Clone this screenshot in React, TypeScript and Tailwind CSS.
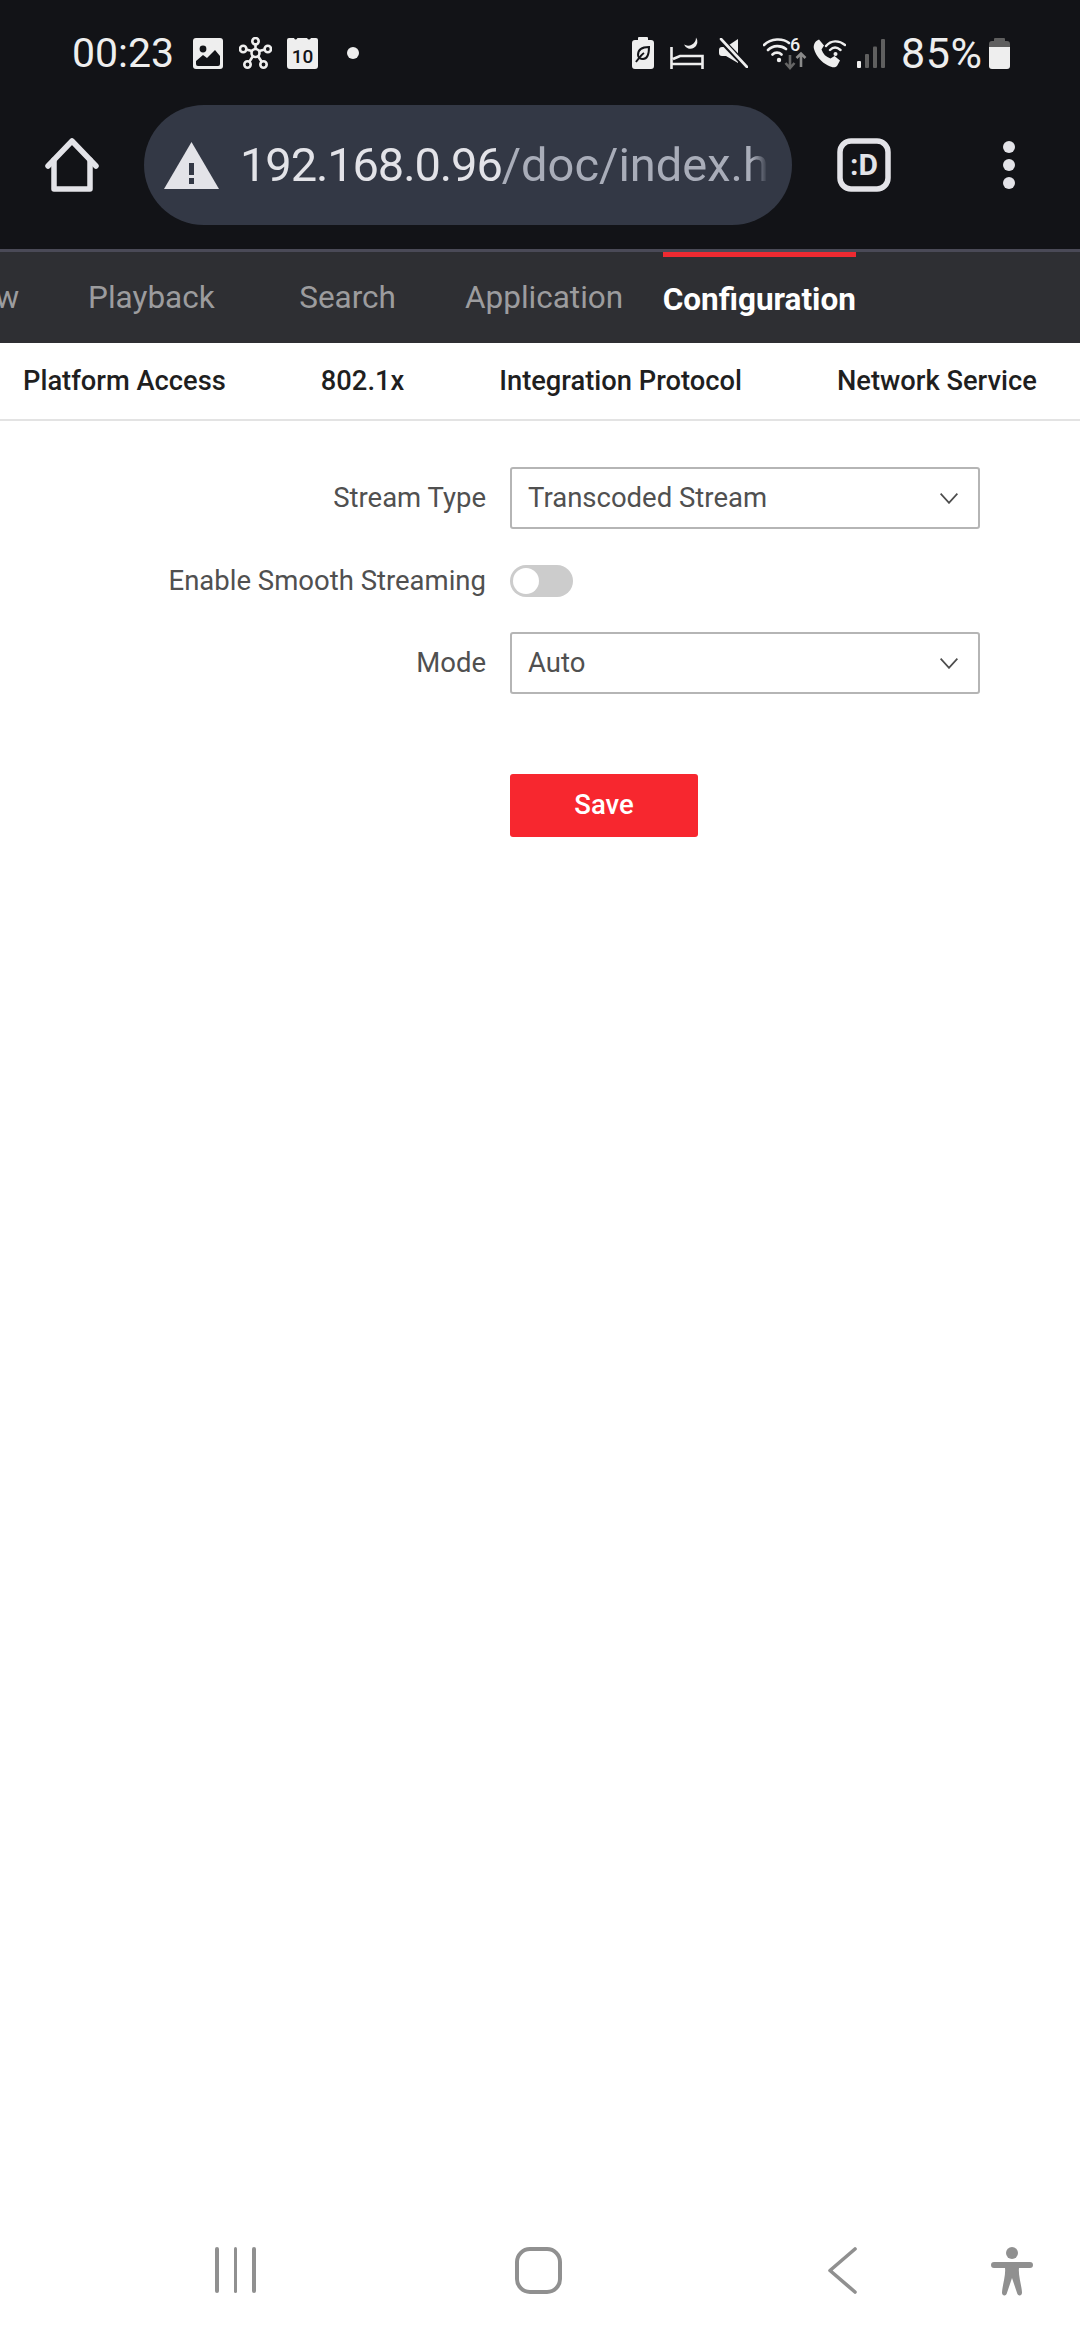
export default function App() {
  return (
    <div className="flex h-[2340px] w-[1080px] flex-col overflow-hidden bg-white font-['Roboto',sans-serif]">
      <header className="h-[249px] bg-[#121317]">
        <div className="flex h-[105px] items-center pt-[1px] pl-[72px] text-[#eeeeee]">
          <span className="w-[121px] text-[41px] leading-none">00:23</span>
          <svg width="30" height="31" viewBox="0 0 30 31">
            <rect width="30" height="31" rx="3" fill="#eeeeee" />
            <circle cx="10" cy="11" r="3.4" fill="#121317" />
            <path d="M3 23 L10 17 L14 20 L22 12 L27 18 V26 a2 2 0 0 1 -2 2 H5 a2 2 0 0 1 -2 -2 Z" fill="#121317" />
          </svg>
          <svg className="ml-[16px]" width="33" height="32" viewBox="0 0 33 32" fill="none" stroke="#eeeeee" strokeWidth="2.6">
            <path d="M16.5 12V7M13 14L7 12.5M20 14L26 12.5M14 19L10.5 24.5M19 19L22.5 24.5" />
            <circle cx="16.5" cy="16" r="4" />
            <circle cx="16.5" cy="4.2" r="3.2" />
            <circle cx="4.2" cy="12" r="3.2" />
            <circle cx="28.8" cy="12" r="3.2" />
            <circle cx="8.5" cy="27.5" r="3.2" />
            <circle cx="24.5" cy="27.5" r="3.2" />
          </svg>
          <svg className="ml-[15px]" width="31" height="32" viewBox="0 0 31 32">
            <path d="M2 1 H7 Q8.5 4 10.5 1 H20 Q22 4 24 1 H29 a2 2 0 0 1 2 2 V29 a3 3 0 0 1 -3 3 H3 a3 3 0 0 1 -3 -3 V3 a2 2 0 0 1 2 -2 Z" fill="#eeeeee" />
            <text x="15.5" y="26" textAnchor="middle" fontSize="19" fontWeight="500" fill="#121317" fontFamily="Roboto, sans-serif">10</text>
          </svg>
          <span className="ml-[29px] h-[12px] w-[12px] rounded-full bg-[#eeeeee]" />
          <svg className="ml-[273px]" width="22" height="32" viewBox="0 0 22 32">
            <path d="M7 0 H15 a1 1 0 0 1 1 1 V3 H19 a3 3 0 0 1 3 3 V29 a3 3 0 0 1 -3 3 H3 a3 3 0 0 1 -3 -3 V6 a3 3 0 0 1 3 -3 H6 V1 a1 1 0 0 1 1 -1 Z" fill="#eeeeee" />
            <path d="M17 10 C10 10 6 13 6 18 C6 21 9 22 11 22 C15 22 17 17 17 10 Z M4 25 C7 21 9 18 12 16" fill="none" stroke="#121317" strokeWidth="2" />
          </svg>
          <svg className="ml-[16px]" width="34" height="32" viewBox="0 0 34 32" fill="none" stroke="#eeeeee" strokeWidth="2.6">
            <path d="M1.5 10V32M1.5 27H32.5V32M3 22L10 19H32.5V27" />
            <path d="M26 0.5 A7 7 0 1 1 14 7.5 A8 8 0 0 0 26 0.5 Z" fill="#eeeeee" stroke="none" />
          </svg>
          <svg className="ml-[15px]" width="29" height="30" viewBox="0 0 29 30">
            <path d="M0 12 Q0 9 3 9 H7 L19 1 V25 L7 18 H3 Q0 18 0 15 Z" fill="#eeeeee" />
            <path d="M1 1 L28 29" stroke="#121317" strokeWidth="6" />
            <path d="M2 1 L28 29" stroke="#eeeeee" strokeWidth="2.6" strokeLinecap="round" />
          </svg>
          <svg className="ml-[15px]" width="44" height="33" viewBox="0 0 44 33" fill="none">
            <path d="M1 8 C8 1 20 1 26 6 M5 13 C10 8 18 8 23 12 M9.5 17.5 C12 15 16 15 18.5 17.5" stroke="#eeeeee" strokeWidth="2.6" strokeLinecap="round" />
            <circle cx="16" cy="23" r="2.2" fill="#eeeeee" />
            <text x="27" y="14" fontSize="18" fontWeight="500" fill="#eeeeee" fontFamily="Roboto, sans-serif">6</text>
            <path d="M27 18V30M22.5 26L27 31L31.5 26" stroke="#666666" strokeWidth="2.6" />
            <path d="M38 30V17M33.5 21L38 16.5L42.5 21" stroke="#8a8a8a" strokeWidth="2.6" />
          </svg>
          <svg className="ml-[6px]" width="33" height="29" viewBox="0 0 33 29" fill="none">
            <path d="M6 0.5 L11 6.5 L8.5 10.5 C10 15 13 18 17.5 19.5 L21.5 17 L27 21.5 L24 27 C22 29 19 28.5 15 26.5 C8 23 3 17 1 10 C0 6 2 2 6 0.5 Z" fill="#eeeeee" />
            <path d="M13 7 C18 1 26 1 32 6 M17 11 C20 8 24 8 27.5 11" stroke="#eeeeee" strokeWidth="2.4" strokeLinecap="round" />
            <circle cx="22.5" cy="15" r="2" fill="#eeeeee" />
          </svg>
          <svg className="ml-[11px]" width="28" height="29" viewBox="0 0 28 29">
            <rect x="0" y="22" width="4" height="7" rx="1" fill="#eeeeee" />
            <rect x="8" y="15" width="4" height="14" rx="1" fill="#5f5f5f" />
            <rect x="16" y="7.5" width="4" height="21.5" rx="1" fill="#5f5f5f" />
            <rect x="24" y="0" width="4" height="29" rx="1" fill="#5f5f5f" />
          </svg>
          <span className="ml-[16px] w-[88px] text-[43px] leading-none tracking-[0.6px]">85%</span>
          <svg width="21" height="31" viewBox="0 0 21 31">
            <path d="M6 0 H15 a1 1 0 0 1 1 1 V3 H18 a3 3 0 0 1 3 3 V9 H0 V6 a3 3 0 0 1 3 -3 H5 V1 a1 1 0 0 1 1 -1 Z" fill="#5f5f5f" />
            <path d="M0 9 H21 V28 a3 3 0 0 1 -3 3 H3 a3 3 0 0 1 -3 -3 Z" fill="#eeeeee" />
          </svg>
        </div>
        <div className="flex h-[120px] items-center pl-[45px]">
          <svg width="54" height="54" viewBox="0 0 54 54" fill="none" stroke="#e3e3e8" strokeWidth="5.5" strokeLinejoin="round" strokeLinecap="round">
            <path d="M3 28 L27 3 L51 28" />
            <path d="M9 22 V51 H45 V22" />
          </svg>
          <div className="ml-[45px] flex h-[120px] w-[648px] items-center rounded-full bg-[#333845] pl-[20px]">
            <svg width="55" height="47" viewBox="0 0 55 47">
              <path d="M27.5 0 L55 47 H0 Z" fill="#e3e3e8" />
              <rect x="25" y="21" width="5" height="12" fill="#333845" />
              <rect x="25" y="36" width="5" height="6" fill="#333845" />
            </svg>
            <div className="ml-[21px] w-[528px] overflow-hidden whitespace-nowrap pb-[2px] text-[47px] leading-none [mask-image:linear-gradient(to_right,black_97%,transparent)]">
              <span className="tracking-[-1.1px] text-[#e3e3e8]">192.168.0.96</span>
              <span className="text-[#a9adb9]">/doc/index.html</span>
            </div>
          </div>
          <svg className="ml-[45px]" width="54" height="54" viewBox="0 0 54 54">
            <rect x="3" y="3" width="48" height="48" rx="11" fill="none" stroke="#e3e3e8" strokeWidth="5.5" />
            <text x="27" y="37" textAnchor="middle" fontSize="30" fontWeight="700" fill="#e3e3e8" fontFamily="Roboto, sans-serif">:D</text>
          </svg>
          <div className="ml-[112px] flex flex-col gap-[6px]">
            <span className="h-[12px] w-[12px] rounded-full bg-[#e3e3e8]" />
            <span className="h-[12px] w-[12px] rounded-full bg-[#e3e3e8]" />
            <span className="h-[12px] w-[12px] rounded-full bg-[#e3e3e8]" />
          </div>
        </div>
      </header>
      <div className="h-[3px] bg-[#4a4a57]" />
      <nav className="flex h-[91px] items-stretch overflow-hidden bg-[#2e2f33] text-[31.5px] text-[#9c9c9e]">
        <span className="ml-[-91px] flex items-center">Preview</span>
        <span className="ml-[69px] flex items-center">Playback</span>
        <span className="ml-[84.5px] flex items-center">Search</span>
        <span className="ml-[69px] flex items-center">Application</span>
        <span className="ml-[39.5px] flex items-center border-t-[5px] border-[#ee2a31] font-bold text-white">Configuration</span>
      </nav>
      <div className="flex h-[78px] items-center border-b-2 border-[#e3e3e3] pl-[23px] text-[27.3px] font-medium text-[#1f1f1f]">
        <span>Platform Access</span>
        <span className="ml-[95px]">802.1x</span>
        <span className="ml-[95px]">Integration Protocol</span>
        <span className="ml-[95px]">Network Service</span>
      </div>
      <main className="flex flex-1 flex-col pt-[46px] text-[27.5px] text-[#505050]">
        <div className="flex h-[62px] items-center">
          <span className="w-[486px] text-right">Stream Type</span>
          <div className="ml-[24px] flex h-[62px] w-[470px] items-center justify-between rounded-[3px] border-2 border-[#b5b5b5] pl-[16px] pr-[20px]">
            <span>Transcoded Stream</span>
            <svg width="18" height="11" viewBox="0 0 18 11" fill="none" stroke="#4d4d4d" strokeWidth="1.8"><path d="M0.6 0.6 L9 9.8 L17.4 0.6" /></svg>
          </div>
        </div>
        <div className="mt-[36px] flex h-[32px] items-center">
          <span className="w-[486px] text-right">Enable Smooth Streaming</span>
          <div className="ml-[24px] flex h-[32px] w-[63px] items-center rounded-full bg-[#cccccc] pl-[3px]">
            <span className="h-[26px] w-[26px] rounded-full bg-white" />
          </div>
        </div>
        <div className="mt-[35px] flex h-[62px] items-center">
          <span className="w-[486px] text-right">Mode</span>
          <div className="ml-[24px] flex h-[62px] w-[470px] items-center justify-between rounded-[3px] border-2 border-[#b5b5b5] pl-[16px] pr-[20px]">
            <span>Auto</span>
            <svg width="18" height="11" viewBox="0 0 18 11" fill="none" stroke="#4d4d4d" strokeWidth="1.8"><path d="M0.6 0.6 L9 9.8 L17.4 0.6" /></svg>
          </div>
        </div>
        <div className="ml-[510px] mt-[80px] flex h-[63px] w-[188px] items-center justify-center rounded-[3px] bg-[#f7272f] pb-[2px] font-medium text-white">Save</div>
      </main>
      <footer className="flex h-[121px] items-start pl-[215px] pt-[28px]">
        <div className="flex h-[46px] gap-[15px]">
          <span className="w-[3.5px] rounded-full bg-[#909090]" />
          <span className="w-[3.5px] rounded-full bg-[#909090]" />
          <span className="w-[3.5px] rounded-full bg-[#909090]" />
        </div>
        <svg className="ml-[259px]" width="47" height="47" viewBox="0 0 47 47" fill="none" stroke="#909090" strokeWidth="4"><rect x="2" y="2" width="43" height="43" rx="13" /></svg>
        <svg className="ml-[266px]" width="29" height="47" viewBox="0 0 29 47" fill="none" stroke="#909090" strokeWidth="3.6" strokeLinecap="round" strokeLinejoin="round"><path d="M27 2 L2 23.5 L27 45" /></svg>
        <svg className="ml-[134px]" width="42" height="50" viewBox="0 0 42 50" fill="#909090">
          <ellipse cx="21" cy="6" rx="6" ry="6" />
          <path d="M3 15 H39 a3 3 0 0 1 0 6 H28 C27 28 31 40 31 46 a2.4 2.4 0 0 1 -4.6 1 L21 31 L15.6 47 a2.4 2.4 0 0 1 -4.6 -1 C11 40 15 28 14 21 H3 a3 3 0 0 1 0 -6 Z" />
        </svg>
      </footer>
    </div>
  );
}
